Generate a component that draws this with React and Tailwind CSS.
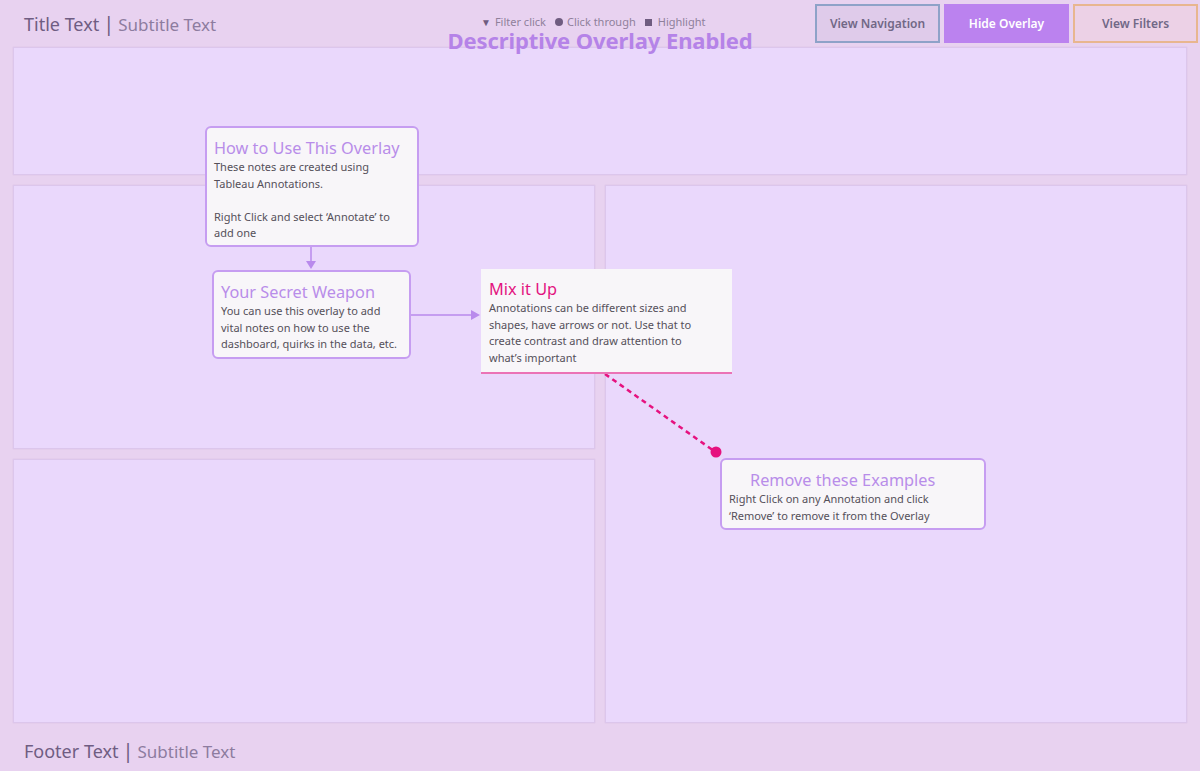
import React from 'react';

const font = { fontFamily: '"Noto Sans", "Open Sans", sans-serif' };

function Panel({ className = '' }) {
  return <div className={`bg-[#ead8fc] border border-[#dcc6ec] shadow-[0_0_1px_rgba(160,120,190,0.3)] ${className}`} />;
}

function Note({ className, title, titleClass = '', children }) {
  return (
    <div className={`absolute bg-[#f8f6f9] ${className}`}>
      <div className={`text-[16.3px] leading-[22px] whitespace-nowrap ${titleClass}`}>{title}</div>
      <div className="text-[11px] leading-[16.5px] text-[#555059] whitespace-nowrap">{children}</div>
    </div>
  );
}

export default function App() {
  return (
    <div className="relative w-[1200px] h-[771px] bg-[#e8d2f0] overflow-hidden flex flex-col" style={font}>
      {/* Header */}
      <div className="h-[47px] flex items-center pl-6 pr-[2px]">
        <div className="flex items-baseline gap-1 text-[18px] w-[457px]">
          <span className="text-[#6f5d82]">Title Text</span>
          <span className="text-[#6f5d82] text-[20px]">|</span>
          <span className="text-[#8d7c9f] text-[17px]">Subtitle Text</span>
        </div>
        <div className="flex items-center gap-[9px] text-[11px] leading-[12px] text-[#8f809b] mb-[3px]">
          <span className="flex items-center gap-1"><span className="text-[#6f5c80] text-[10px]">▼</span>Filter click</span>
          <span className="flex items-center gap-1"><span className="w-[8px] h-[8px] rounded-full bg-[#6f5c80]" />Click through</span>
          <span className="flex items-center gap-[6px]"><span className="w-[7px] h-[7px] bg-[#6f5c80]" />Highlight</span>
        </div>
        <div className="ml-auto flex gap-[4px] items-center text-[12px] font-semibold">
          <button className="w-[125px] h-[39px] border-2 border-[#8ea2c8] bg-[#dfcbea] text-[#716886]">View Navigation</button>
          <button className="w-[125px] h-[39px] bg-[#bb82ef] text-white">Hide Overlay</button>
          <button className="w-[125px] h-[39px] border-2 border-[#e8b68f] bg-[#ecd1e6] text-[#716886]">View Filters</button>
        </div>
      </div>

      {/* Panels */}
      <div className="flex-1 flex flex-col gap-[10px] pl-[13px] pr-[13px]">
        <Panel className="h-[128px]" />
        <div className="grid grid-cols-2 grid-rows-2 gap-[10px] h-[538px]">
          <Panel />
          <Panel className="row-span-2" />
          <Panel />
        </div>
      </div>

      {/* Footer */}
      <div className="h-[48px] flex items-center pl-6 pt-[8px]">
        <div className="flex items-baseline gap-1 text-[18px]">
          <span className="text-[#6f5d82]">Footer Text</span>
          <span className="text-[#6f5d82] text-[20px]">|</span>
          <span className="text-[#8d7c9f] text-[17px]">Subtitle Text</span>
        </div>
      </div>

      {/* Overlay headline */}
      <div className="absolute left-0 right-0 top-[29px] text-center text-[22px] leading-[22px] font-bold text-[#b583e8] tracking-[-0.1px]">
        Descriptive Overlay Enabled
      </div>

      {/* Connectors */}
      <svg className="absolute inset-0 pointer-events-none" width="1200" height="771">
        <line x1="311" y1="246" x2="311" y2="262" stroke="#b98aec" strokeWidth="1.5" />
        <polygon points="306,261 316,261 311,269" fill="#b98aec" />
        <line x1="410" y1="315" x2="472" y2="315" stroke="#b98aec" strokeWidth="1.5" />
        <polygon points="471,310 471,320 480,315" fill="#b98aec" />
        <line x1="605" y1="374" x2="714" y2="451" stroke="#e6127f" strokeWidth="2.5" strokeDasharray="5 4" />
        <circle cx="716" cy="452" r="5.5" fill="#e6127f" />
      </svg>

      {/* Annotations */}
      <Note
        className="left-[205px] top-[126px] w-[214px] h-[121px] rounded-[6px] border-2 border-[#c69df1] px-[7px] pt-[9px]"
        title="How to Use This Overlay"
        titleClass="text-[#b88de9]"
      >
        These notes are created using<br />Tableau Annotations.<br /><br />Right Click and select ‘Annotate’ to<br />add one
      </Note>
      <Note
        className="left-[212px] top-[270px] w-[199px] h-[89px] rounded-[6px] border-2 border-[#c69df1] px-[7px] pt-[9px]"
        title="Your Secret Weapon"
        titleClass="text-[#b88de9]"
      >
        You can use this overlay to add<br />vital notes on how to use the<br />dashboard, quirks in the data, etc.
      </Note>
      <Note
        className="left-[481px] top-[269px] w-[251px] h-[105px] border-b-2 border-[#eb73b6] px-[8px] pt-[9px]"
        title="Mix it Up"
        titleClass="text-[#e3137f]"
      >
        Annotations can be different sizes and<br />shapes, have arrows or not. Use that to<br />create contrast and draw attention to<br />what’s important
      </Note>
      <Note
        className="left-[720px] top-[458px] w-[266px] h-[72px] rounded-[6px] border-2 border-[#c69df1] px-[7px] pt-[9px]"
        title={<div className="pl-[21px]">Remove these Examples</div>}
        titleClass="text-[#b88de9]"
      >
        Right Click on any Annotation and click<br />‘Remove’ to remove it from the Overlay
      </Note>
    </div>
  );
}
